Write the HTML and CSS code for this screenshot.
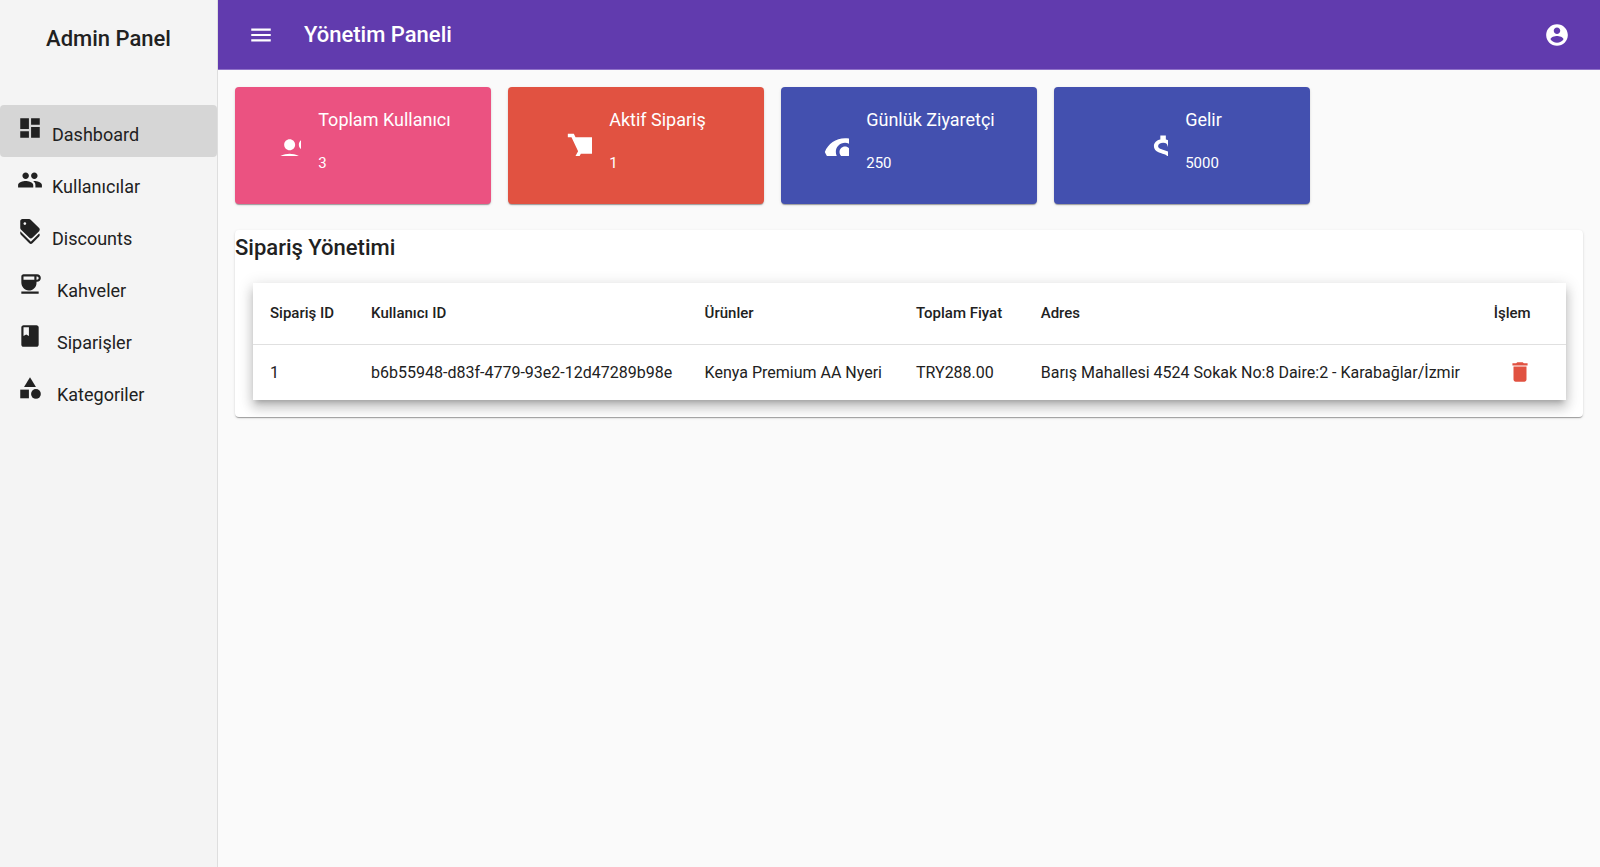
FILE: index.html
```html
<!DOCTYPE html>
<html lang="tr">
<head>
<meta charset="utf-8">
<meta name="viewport" content="width=device-width, initial-scale=1">
<title>Yönetim Paneli</title>
<link rel="stylesheet" href="styles.css">
</head>
<body>
<div class="layout">
  <aside class="sidebar">
    <h2 class="brand">Admin Panel</h2>
    <nav class="nav">
      <a class="nav-item active" href="#" aria-current="page">
        <svg class="icon" viewBox="0 0 24 24" aria-hidden="true"><path d="M3 13h8V3H3v10zm0 8h8v-6H3v6zm10 0h8V11h-8v10zm0-18v6h8V3h-8z"/></svg>
        <span>Dashboard</span>
      </a>
      <a class="nav-item" href="#">
        <svg class="icon" viewBox="0 0 24 24" aria-hidden="true"><path d="M16 11c1.66 0 2.99-1.34 2.99-3S17.66 5 16 5s-3 1.34-3 3 1.34 3 3 3zm-8 0c1.66 0 2.99-1.34 2.99-3S9.66 5 8 5 5 6.34 5 8s1.34 3 3 3zm0 2c-2.33 0-7 1.17-7 3.5V19h14v-2.500c0-2.330-4.670-3.500-7-3.500zm8 0c-.29 0-.62.02-.97.05 1.16.84 1.97 1.970 1.970 3.450V19h6v-2.500c0-2.330-4.670-3.500-7-3.500z"/></svg>
        <span>Kullanıcılar</span>
      </a>
      <a class="nav-item" href="#">
        <svg class="icon" viewBox="0 0 24 24" aria-hidden="true"><path d="M12.790 21L3 11.210v2c0 .53.21 1.040.59 1.410l7.790 7.790c.78.78 2.050.78 2.830 0l6.210-6.210c.78-.78.78-2.050 0-2.830L12.790 21z"/><path d="M11.380 17.410c.78.78 2.050.78 2.830 0l6.210-6.210c.78-.78.78-2.050 0-2.830L12.630.58C12.250.21 11.740 0 11.210 0H5C3.900 0 3 .9 3 2v6.210c0 .53.21 1.040.59 1.410l7.790 7.790zM7.250 3c.69 0 1.250.56 1.250 1.250S7.940 5.500 7.250 5.500 6 4.940 6 4.250 6.560 3 7.250 3z"/></svg>
        <span>Discounts</span>
      </a>
      <a class="nav-item spaced" href="#">
        <svg class="icon" viewBox="0 0 24 24" aria-hidden="true"><path d="M18.500 3H6C4.900 3 4 3.900 4 5v5.710c0 3.830 2.950 7.180 6.780 7.290 3.960.12 7.220-3.060 7.220-7v-1h.5c1.930 0 3.500-1.570 3.500-3.500S20.430 3 18.500 3zM16 5v3H6V5h10zm2.500 3H18V5h.5c.83 0 1.500.67 1.500 1.500S19.330 8 18.500 8zM4 19h16v2H4v-2z"/></svg>
        <span>Kahveler</span>
      </a>
      <a class="nav-item spaced" href="#">
        <svg class="icon" viewBox="0 0 24 24" aria-hidden="true"><path d="M18 2H6c-1.100 0-2 .9-2 2v16c0 1.100.9 2 2 2h12c1.100 0 2-.9 2-2V4c0-1.100-.9-2-2-2zM6 4h5v8l-2.500-1.500L6 12V4z"/></svg>
        <span>Siparişler</span>
      </a>
      <a class="nav-item spaced" href="#">
        <svg class="icon" viewBox="0 0 24 24" aria-hidden="true"><path d="M12 2l-5.500 9h11z"/><circle cx="17.500" cy="17.500" r="4.500"/><path d="M3 13.500h8v8H3z"/></svg>
        <span>Kategoriler</span>
      </a>
    </nav>
  </aside>

  <div class="page">
    <header class="toolbar">
      <button class="icon-button" type="button" aria-label="Menü">
        <svg class="icon" viewBox="0 0 24 24" aria-hidden="true"><path d="M3 18h18v-2H3v2zm0-5h18v-2H3v2zm0-7v2h18V6H3z"/></svg>
      </button>
      <h1 class="toolbar-title">Yönetim Paneli</h1>
      <button class="icon-button account" type="button" aria-label="Hesap">
        <svg class="icon" viewBox="0 0 24 24" aria-hidden="true"><path d="M12 2C6.480 2 2 6.480 2 12s4.480 10 10 10 10-4.480 10-10S17.520 2 12 2zm0 3c1.660 0 3 1.340 3 3s-1.340 3-3 3-3-1.340-3-3 1.340-3 3-3zm0 14.200c-2.500 0-4.710-1.280-6-3.220.03-1.990 4-3.080 6-3.080 1.990 0 5.970 1.090 6 3.080-1.290 1.940-3.500 3.220-6 3.220z"/></svg>
      </button>
    </header>

    <main class="content">
      <section class="stats">
        <article class="stat users">
          <div class="stat-icon"><svg viewBox="0 0 24 24" aria-hidden="true"><path d="M16 11c1.660 0 2.990-1.340 2.990-3S17.660 5 16 5s-3 1.340-3 3 1.340 3 3 3zm-8 0c1.660 0 2.990-1.340 2.990-3S9.660 5 8 5 5 6.340 5 8s1.340 3 3 3zm0 2c-2.330 0-7 1.170-7 3.500V19h14v-2.500c0-2.330-4.670-3.500-7-3.500z"/></svg></div>
          <div><h3 class="stat-title">Toplam Kullanıcı</h3><p class="stat-value">3</p></div>
        </article>
        <article class="stat orders">
          <div class="stat-icon"><svg viewBox="0 0 24 24" aria-hidden="true"><path d="M7 18c-1.100 0-1.990.9-1.990 2S5.900 22 7 22s2-.9 2-2-.9-2-2-2zM1 2v2h2l3.600 7.590-1.350 2.450c-.16.28-.25.61-.25.96 0 1.100.9 2 2 2h12v-2H7.420c-.14 0-.25-.11-.25-.25l.03-.12.9-1.630h7.450c.75 0 1.410-.41 1.750-1.030l3.580-6.490A1 1 0 0 0 20 4H5.210l-.94-2H1z"/></svg></div>
          <div><h3 class="stat-title">Aktif Sipariş</h3><p class="stat-value">1</p></div>
        </article>
        <article class="stat">
          <div class="stat-icon"><svg viewBox="0 0 24 24" aria-hidden="true"><path d="M12 4.500C7 4.500 2.730 7.610 1 12c1.730 4.390 6 7.500 11 7.500s9.270-3.110 11-7.500c-1.730-4.390-6-7.500-11-7.500zM12 17c-2.760 0-5-2.240-5-5s2.240-5 5-5 5 2.240 5 5-2.240 5-5 5zm0-8c-1.660 0-3 1.340-3 3s1.340 3 3 3 3-1.340 3-3-1.340-3-3-3z"/></svg></div>
          <div><h3 class="stat-title">Günlük Ziyaretçi</h3><p class="stat-value">250</p></div>
        </article>
        <article class="stat">
          <div class="stat-icon"><svg viewBox="0 0 24 24" aria-hidden="true"><path d="M11.800 10.900c-2.270-.59-3-1.200-3-2.150 0-1.090 1.010-1.850 2.700-1.850 1.780 0 2.440.85 2.500 2.100h2.210c-.07-1.720-1.120-3.300-3.210-3.810V3h-3v2.160c-1.940.42-3.500 1.680-3.500 3.610 0 2.310 1.910 3.460 4.700 4.130 2.500.6 3 1.480 3 2.410 0 .69-.49 1.790-2.700 1.790-2.060 0-2.870-.92-2.980-2.100h-2.200c.12 2.190 1.760 3.420 3.680 3.830V21h3v-2.150c1.950-.37 3.500-1.500 3.500-3.550 0-2.840-2.430-3.810-4.700-4.400z"/></svg></div>
          <div><h3 class="stat-title">Gelir</h3><p class="stat-value">5000</p></div>
        </article>
      </section>

      <section class="panel">
        <h2 class="panel-title">Sipariş Yönetimi</h2>
        <table class="table">
          <colgroup>
            <col class="col-id"><col class="col-user"><col class="col-products"><col class="col-total"><col class="col-address"><col>
          </colgroup>
          <thead>
            <tr>
              <th scope="col">Sipariş ID</th>
              <th scope="col">Kullanıcı ID</th>
              <th scope="col">Ürünler</th>
              <th scope="col">Toplam Fiyat</th>
              <th scope="col">Adres</th>
              <th scope="col">İşlem</th>
            </tr>
          </thead>
          <tbody>
            <tr>
              <td>1</td>
              <td>b6b55948-d83f-4779-93e2-12d47289b98e</td>
              <td>Kenya Premium AA Nyeri</td>
              <td>TRY288.00</td>
              <td>Barış Mahallesi 4524 Sokak No:8 Daire:2 - Karabağlar/İzmir</td>
              <td>
                <button class="icon-button delete" type="button" aria-label="Sil">
                  <svg class="icon" viewBox="0 0 24 24" aria-hidden="true"><path d="M6 19c0 1.100.9 2 2 2h8c1.100 0 2-.9 2-2V7H6v12zM19 4h-3.500l-1-1h-5l-1 1H5v2h14V4z"/></svg>
                </button>
              </td>
            </tr>
          </tbody>
        </table>
      </section>
    </main>
  </div>
</div>
</body>
</html>
```
FILE: styles.css
```css
* {
  box-sizing: border-box;
}

body {
  margin: 0;
  background: #fafafa;
  color: #212121;
  font-family: Roboto, "Liberation Sans", sans-serif;
  font-size: 15px;
}

h1, h2, h3, p {
  margin: 0;
}

.layout {
  display: flex;
  min-height: 100vh;
}

.icon {
  display: block;
  flex: none;
  width: 26px;
  height: 26px;
  fill: currentColor;
}

/* Sidebar */
.sidebar {
  flex: none;
  width: 218px;
  background: #f4f4f4;
  border-right: 1px solid #dedede;
}

.brand {
  padding: 22px 16px 49px;
  font-size: 22px;
  font-weight: 500;
  line-height: 34px;
  text-align: center;
}

.nav {
  display: flex;
  flex-direction: column;
}

.nav-item {
  display: flex;
  align-items: baseline;
  gap: 9px;
  height: 52px;
  padding: 10px 17px;
  border-radius: 4px;
  color: inherit;
  font-size: 18px;
  line-height: 26px;
  text-decoration: none;
}

.nav-item.active {
  background: #d6d6d6;
}

.nav-item.spaced {
  gap: 14px;
}

/* Toolbar */
.page {
  flex: 1;
  min-width: 0;
}

.toolbar {
  display: flex;
  align-items: center;
  gap: 17px;
  height: 70px;
  padding: 0 17px;
  background: #613bae;
  border-bottom: 1px solid #9072c8;
  color: #fff;
}

.toolbar-title {
  font-size: 22px;
  font-weight: 500;
}

.icon-button {
  display: inline-block;
  padding: 13px;
  border: 0;
  border-radius: 50%;
  background: none;
  color: inherit;
  cursor: pointer;
}

.account {
  margin-left: auto;
}

/* Stat cards */
.content {
  padding: 17px;
}

.stats {
  display: grid;
  grid-template-columns: repeat(5, 1fr);
  gap: 17px;
}

.stat {
  display: flex;
  align-items: center;
  justify-content: center;
  gap: 17px;
  padding: 18px 17px 17px;
  border-radius: 4px;
  background: #4350af;
  box-shadow: 0 2px 1px -1px rgba(0, 0, 0, 0.2), 0 1px 1px rgba(0, 0, 0, 0.14), 0 1px 3px rgba(0, 0, 0, 0.12);
  color: #fff;
}

.stat.users {
  background: #eb5281;
}

.stat.orders {
  background: #e15241;
}

.stat-icon {
  flex: none;
  width: 26px;
  height: 26px;
  margin-bottom: 6px;
  overflow: hidden;
}

.stat-icon svg {
  display: block;
  width: 44px;
  height: 44px;
  fill: currentColor;
}

.stat-title {
  margin-bottom: 17px;
  font-size: 18px;
  font-weight: 400;
  line-height: 30px;
}

.stat-value {
  margin-bottom: 13px;
  font-size: 15px;
  line-height: 22px;
}

/* Orders panel */
.panel {
  margin-top: 26px;
  padding-bottom: 17px;
  overflow: hidden;
  border-radius: 4px;
  background: #fff;
  box-shadow: 0 2px 1px -1px rgba(0, 0, 0, 0.2), 0 1px 1px rgba(0, 0, 0, 0.14), 0 1px 3px rgba(0, 0, 0, 0.12);
}

.panel-title {
  font-size: 22px;
  font-weight: 500;
  line-height: 35px;
}

.table {
  width: calc(100% - 35px);
  margin: 18px 17px 0 18px;
  table-layout: fixed;
  border-collapse: collapse;
  background: #fff;
  box-shadow: 0 5px 5px -3px rgba(0, 0, 0, 0.2), 0 8px 10px 1px rgba(0, 0, 0, 0.14), 0 3px 14px 2px rgba(0, 0, 0, 0.12);
  text-align: left;
  white-space: nowrap;
}

.col-id { width: 7.7%; }
.col-user { width: 25.4%; }
.col-products { width: 16.1%; }
.col-total { width: 9.5%; }
.col-address { width: 34.5%; }

.table th {
  height: 61px;
  padding: 0 17px;
  border-bottom: 1px solid #e0e0e0;
  font-weight: 500;
}

.table td {
  height: 56px;
  padding: 0 17px;
  font-size: 16px;
}

.delete {
  display: block;
  color: #e15241;
}
```
